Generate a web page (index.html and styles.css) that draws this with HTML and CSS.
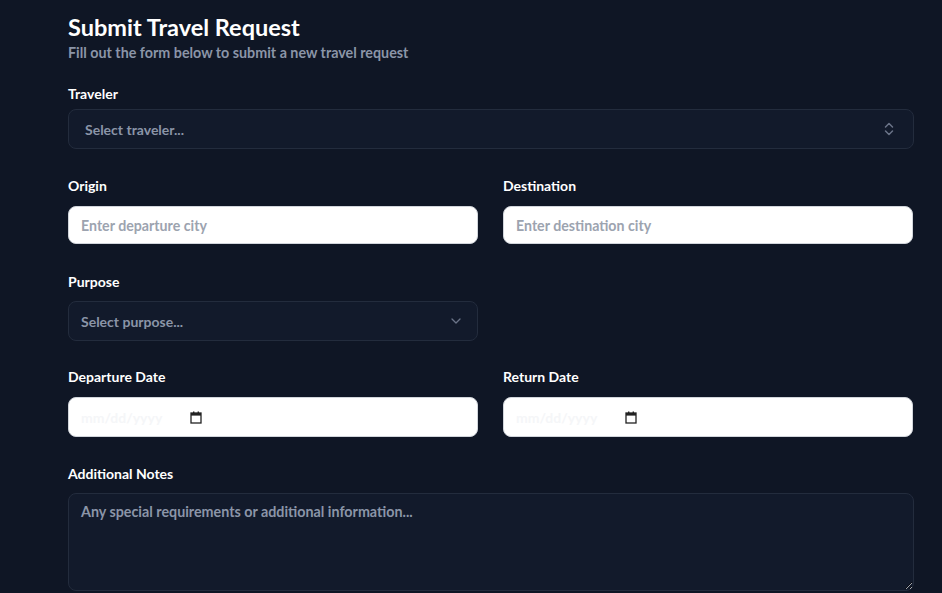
FILE: index.html
```html
<!DOCTYPE html>
<html lang="en">
<head>
<meta charset="utf-8">
<title>Submit Travel Request</title>
<link rel="stylesheet" href="styles.css">
</head>
<body>
<main class="page">
  <header class="page-head">
    <h1 class="title">Submit Travel Request</h1>
    <p class="subtitle">Fill out the form below to submit a new travel request</p>
  </header>

  <form class="form">
    <div class="field field-traveler">
      <label class="label">Traveler</label>
      <button type="button" class="select select-lg">
        <span class="select-text">Select traveler...</span>
        <svg class="updown" width="12" height="16" viewBox="0 0 12 16" fill="none" stroke="currentColor" stroke-width="1.5" stroke-linecap="round" stroke-linejoin="round"><path d="M2.5 6 6 2.5 9.5 6"/><path d="M2.5 10 6 13.5 9.5 10"/></svg>
      </button>
    </div>

    <div class="row">
      <div class="field">
        <label class="label">Origin</label>
        <input class="input" type="text" placeholder="Enter departure city">
      </div>
      <div class="field">
        <label class="label">Destination</label>
        <input class="input" type="text" placeholder="Enter destination city">
      </div>
    </div>

    <div class="row row-purpose">
      <div class="field">
        <label class="label">Purpose</label>
        <div class="select">
          <span class="select-text">Select purpose...</span>
          <svg class="chev" width="10" height="6" viewBox="0 0 10 6" fill="none" stroke="currentColor" stroke-width="1.3" stroke-linecap="round" stroke-linejoin="round"><path d="M1 1 5 5 9 1"/></svg>
        </div>
      </div>
    </div>

    <div class="row row-dates">
      <div class="field">
        <label class="label">Departure Date</label>
        <div class="date">
          <span class="date-ph">mm/dd/yyyy</span>
          <svg class="cal" width="12" height="13" viewBox="0 0 12 13"><rect x="1" y="2" width="10" height="10" fill="none" stroke="#222" stroke-width="1.3"/><rect x="1" y="2" width="10" height="2.6" fill="#222"/><rect x="3" y="0.5" width="1.4" height="2.5" fill="#222"/><rect x="7.6" y="0.5" width="1.4" height="2.5" fill="#222"/></svg>
        </div>
      </div>
      <div class="field">
        <label class="label">Return Date</label>
        <div class="date">
          <span class="date-ph">mm/dd/yyyy</span>
          <svg class="cal" width="12" height="13" viewBox="0 0 12 13"><rect x="1" y="2" width="10" height="10" fill="none" stroke="#222" stroke-width="1.3"/><rect x="1" y="2" width="10" height="2.6" fill="#222"/><rect x="3" y="0.5" width="1.4" height="2.5" fill="#222"/><rect x="7.6" y="0.5" width="1.4" height="2.5" fill="#222"/></svg>
        </div>
      </div>
    </div>

    <div class="field field-notes">
      <label class="label">Additional Notes</label>
      <textarea class="textarea" placeholder="Any special requirements or additional information..."></textarea>
    </div>
  </form>
</main>
</body>
</html>
```

FILE: styles.css
```css
* { box-sizing: border-box; }
html, body { margin: 0; padding: 0; }
body {
  background: #0f1625;
  color: #f8fafc;
  font-family: "Lato", "Open Sans", sans-serif;
  height: 593px;
  overflow: hidden;
}
.page {
  width: 846px;
  margin-left: 68px;
  padding-top: 10px;
}
.title {
  margin: 0;
  font-size: 23.5px;
  line-height: 34px;
  font-weight: 700;
  color: #ffffff;
}
.subtitle {
  margin: 0;
  font-size: 14.3px;
  line-height: 18px;
  font-weight: 700;
  color: #8b95a8;
}
.form { margin-top: 22px; }
.field { display: flex; flex-direction: column; }
.label {
  font-size: 14px;
  line-height: 20px;
  font-weight: 700;
  color: #ffffff;
  margin-bottom: 10px;
}
.field-traveler .label { margin-bottom: 5px; }
.row {
  display: grid;
  grid-template-columns: 410px 410px;
  column-gap: 25px;
  margin-top: 27px;
}
.row-purpose { margin-top: 28px; }
.row-purpose .label { margin-bottom: 9px; }
.row-dates { margin-top: 26px; }
.field-notes { margin-top: 27px; }
.field-notes .label { margin-bottom: 9px; }
.select {
  height: 40px;
  border: 1px solid #232c3d;
  border-radius: 8px;
  background: #121a2b;
  display: flex;
  align-items: center;
  justify-content: space-between;
  padding: 0 16px 0 12px;
  color: #8b95a8;
  font-family: inherit;
  font-size: 14px;
  font-weight: 700;
}
.select-lg {
  width: 100%;
  padding: 0 18px 0 16px;
  text-align: left;
}
.updown { color: #6b7488; }
.chev { color: #6b7488; }
.input {
  height: 38px;
  border: 1px solid #d1d5db;
  border-radius: 8px;
  background: #ffffff;
  padding: 0 12px;
  font-family: inherit;
  font-size: 14.2px;
  font-weight: 700;
  color: #111827;
  outline: none;
}
.input::placeholder { color: #9ca3af; }
.date {
  height: 40px;
  border: 1px solid #d1d5db;
  border-radius: 8px;
  background: #ffffff;
  display: flex;
  align-items: center;
  padding: 0 12px;
  gap: 12px;
}
.date-ph {
  font-size: 14px;
  font-weight: 700;
  color: #f5f6f8;
  width: 97px;
}
.cal { display: block; }
.textarea {
  height: 98px;
  border: 1px solid #232c3d;
  border-radius: 8px;
  background: #121a2b;
  padding: 9px 12px;
  font-family: inherit;
  font-size: 14.3px;
  font-weight: 700;
  color: #e5e7eb;
  resize: vertical;
  outline: none;
}
.textarea::placeholder { color: #8b95a8; }
```
